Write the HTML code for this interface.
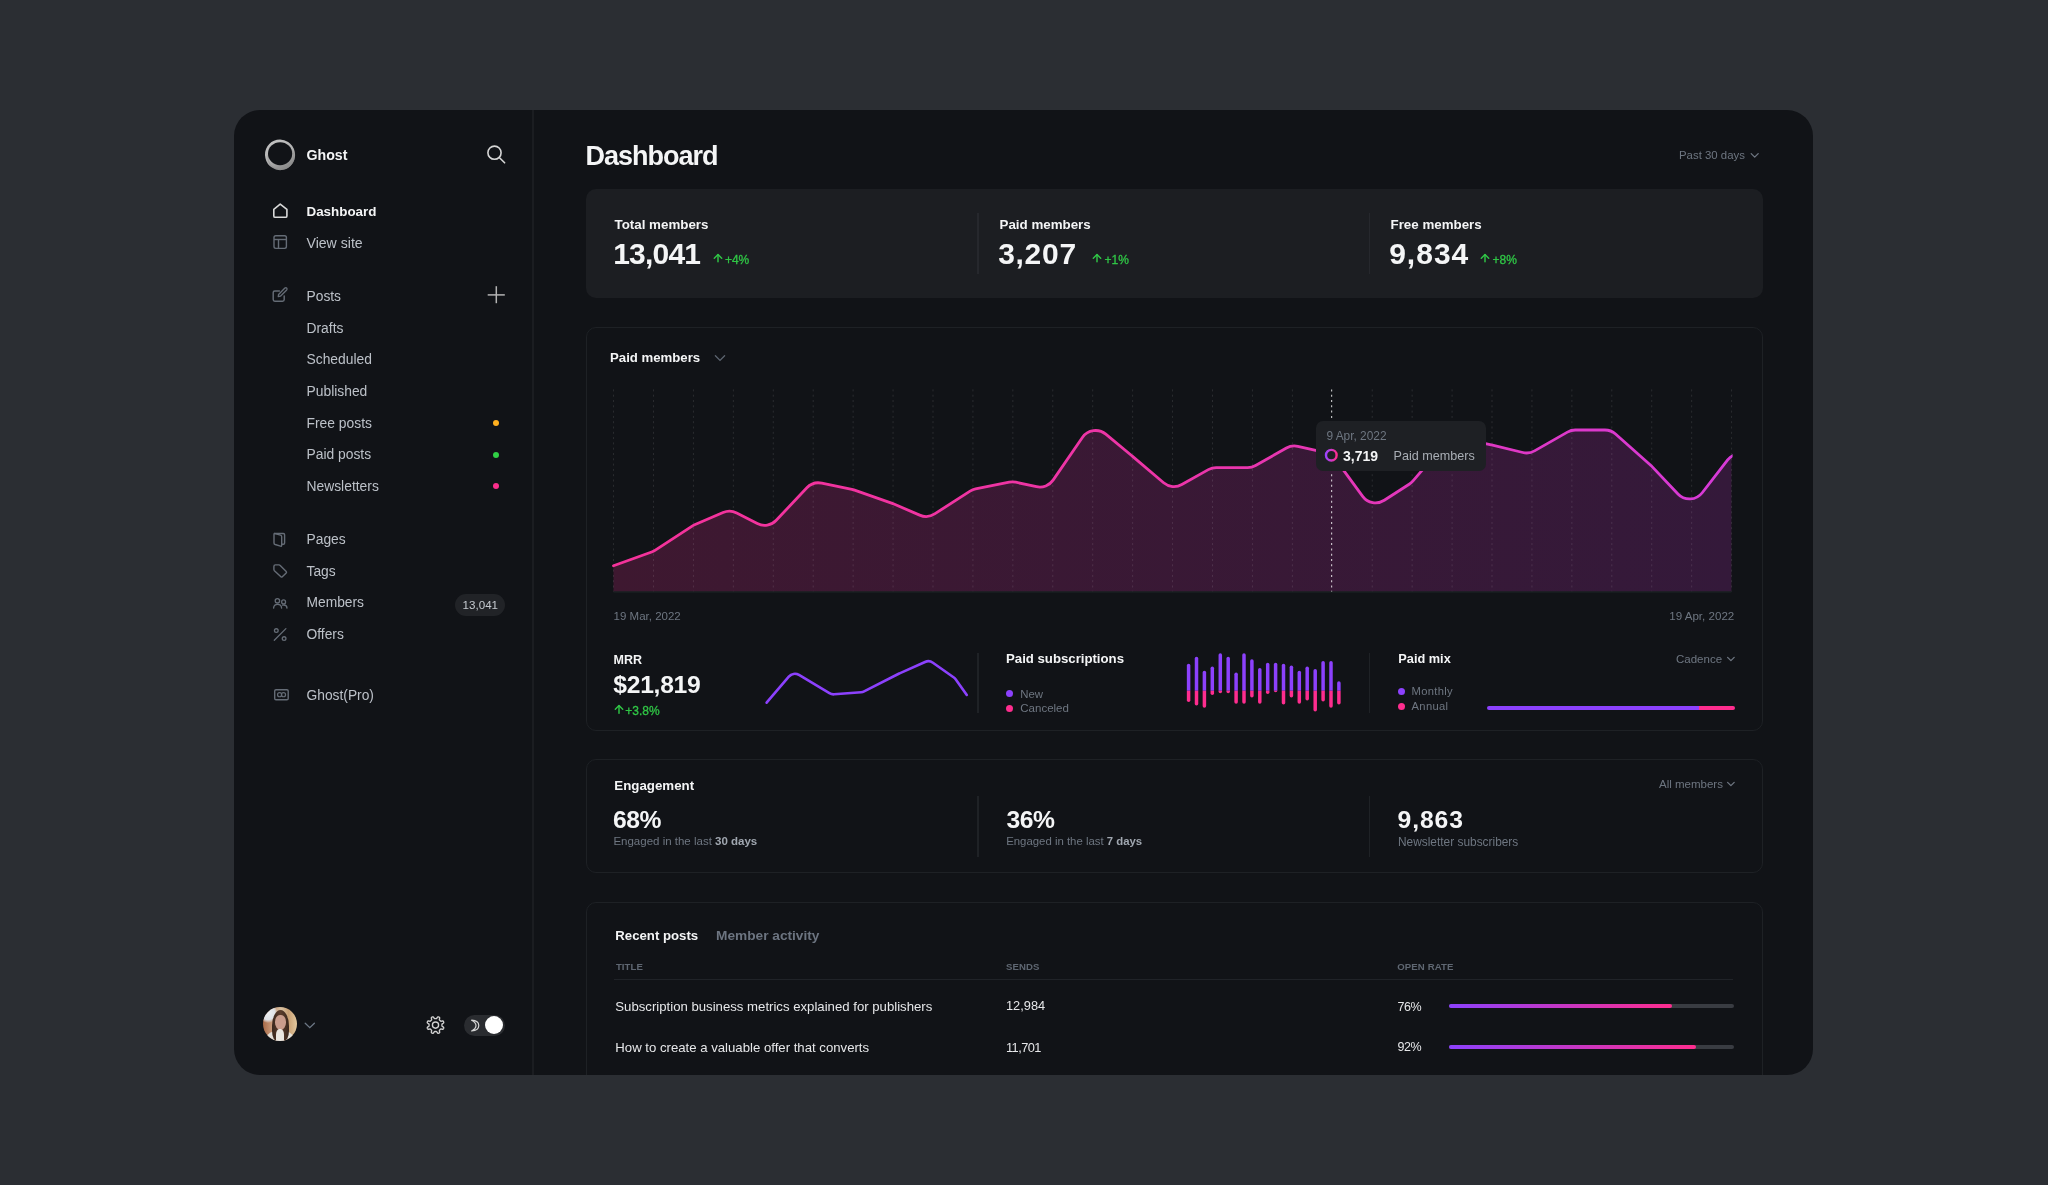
<!DOCTYPE html>
<html><head><meta charset="utf-8"><title>Ghost Dashboard</title>
<style>
html,body{margin:0;padding:0;}
body{width:2048px;height:1185px;background:#2b2e33;position:relative;overflow:hidden;font-family:"Liberation Sans",sans-serif;}
#win{position:absolute;left:234px;top:110px;width:1579px;height:965px;background:#111317;border-radius:26px;overflow:hidden;}
#in{position:absolute;left:-234px;top:-110px;width:2048px;height:1185px;will-change:transform;}
.t{position:absolute;line-height:1;white-space:nowrap;}
.b{position:absolute;}
</style></head><body>
<div id="win"><div id="in">
<div class="b" style="left:532px;top:110px;width:2px;height:965px;background:#1b1d21;border-radius:0px;"></div>
<svg class="b" style="left:0;top:0" width="2048" height="1185" viewBox="0 0 2048 1185"><defs><linearGradient id="lgo" x1="0" y1="0" x2="0.3" y2="1"><stop offset="0" stop-color="#c4c4c4"/><stop offset="0.6" stop-color="#b2b2b2"/><stop offset="1" stop-color="#8e8e8e"/></linearGradient></defs><ellipse cx="280.1" cy="154.8" rx="15" ry="15.35" fill="url(#lgo)" transform="rotate(-12 280 155)"/><ellipse cx="280.5" cy="157.6" rx="13.2" ry="12.2" fill="none" stroke="#8a8a8a" stroke-width="0.7" stroke-opacity="0.7" transform="rotate(-12 280 155)"/><ellipse cx="280.1" cy="153.7" rx="12.1" ry="11.5" fill="#111317"/></svg>
<div class="t" style="left:306.50px;top:148.38px;font-size:14.2px;color:#f4f5f6;font-weight:700;">Ghost</div>
<svg class="b" style="left:484px;top:142px;" width="24" height="24" viewBox="0 0 24 24"><circle cx="10.5" cy="10.7" r="6.6" fill="none" stroke="#d6d6d6" stroke-width="1.6"/><line x1="15.3" y1="15.5" x2="20.6" y2="20.8" stroke="#d6d6d6" stroke-width="1.6" stroke-linecap="round"/></svg>
<svg class="b" style="left:0;top:0" width="2048" height="1185" viewBox="0 0 2048 1185"><path d="M273.8 209.3 L280.2 204.1 L286.9 209.3 V215.9 Q286.9 217.3 285.5 217.3 H275.2 Q273.8 217.3 273.8 215.9 Z" fill="none" stroke="#d9d9d9" stroke-width="1.6" stroke-linejoin="round"/><rect x="274" y="235.7" width="12.4" height="12.7" rx="1.8" fill="none" stroke="#656c76" stroke-width="1.4"/><line x1="274" y1="239.5" x2="286.4" y2="239.5" stroke="#656c76" stroke-width="1.4"/><line x1="278.5" y1="239.5" x2="278.5" y2="248.4" stroke="#656c76" stroke-width="1.4"/><path d="M279.4 290.9 H274.8 Q273.2 290.9 273.2 292.5 V299.6 Q273.2 301.2 274.8 301.2 H282.6 Q284.2 301.2 284.2 299.6 V295.9" fill="none" stroke="#656c76" stroke-width="1.45" stroke-linecap="round"/><path d="M278.3 296.6 L278.6 294.4 L284.9 288.1 Q285.8 287.3 286.7 288.1 Q287.5 289 286.7 289.9 L280.4 296.2 Z" fill="none" stroke="#656c76" stroke-width="1.35" stroke-linejoin="round"/><path d="M274.2 533.5 H283.3 Q284.6 533.5 284.6 534.8 V542.9 Q284.6 544.2 283.3 544.2 H281.8" fill="none" stroke="#656c76" stroke-width="1.4" stroke-linejoin="round"/><path d="M274 534.4 Q274 533.3 275.1 533.6 L280.5 535.2 Q281.7 535.6 281.7 536.8 V545.3 Q281.7 546.5 280.5 546.1 L275.2 544.5 Q274 544.1 274 542.9 Z" fill="none" stroke="#656c76" stroke-width="1.4" stroke-linejoin="round"/><path d="M273.9 569.6 V566.4 Q273.9 564.9 275.4 564.9 H279 Q279.7 564.9 280.2 565.4 L286.2 571.5 Q286.9 572.2 286.2 572.9 L282.3 576.8 Q281.6 577.5 280.9 576.8 L274.4 570.7 Q273.9 570.2 273.9 569.6 Z" fill="none" stroke="#656c76" stroke-width="1.4" stroke-linejoin="round"/><circle cx="277.4" cy="600.8" r="2.2" fill="none" stroke="#656c76" stroke-width="1.3"/><circle cx="283.6" cy="601.9" r="1.95" fill="none" stroke="#656c76" stroke-width="1.3"/><path d="M273.6 608.1 Q273.8 604.4 277.6 604.4 Q281.4 604.4 281.6 608.1" fill="none" stroke="#656c76" stroke-width="1.3" stroke-linecap="round"/><path d="M282.6 605.2 Q283.1 605 283.8 605 Q286.8 605 287 608.1" fill="none" stroke="#656c76" stroke-width="1.3" stroke-linecap="round"/><circle cx="276.3" cy="630.6" r="1.85" fill="none" stroke="#656c76" stroke-width="1.3"/><circle cx="284.1" cy="638.6" r="1.85" fill="none" stroke="#656c76" stroke-width="1.3"/><line x1="274.3" y1="640.2" x2="285.9" y2="628.6" stroke="#656c76" stroke-width="1.3" stroke-linecap="round"/><rect x="274.7" y="689.7" width="13.5" height="10.1" rx="1.3" fill="none" stroke="#656c76" stroke-width="1.4"/><circle cx="279.6" cy="694.7" r="2.05" fill="none" stroke="#656c76" stroke-width="1.2"/><circle cx="283.5" cy="694.7" r="2.05" fill="none" stroke="#656c76" stroke-width="1.2"/></svg>
<div class="t" style="left:306.50px;top:205.06px;font-size:13.4px;color:#f4f5f6;font-weight:700;">Dashboard</div>
<div class="t" style="left:306.50px;top:236.26px;font-size:14.1px;color:#bcc1c8;">View site</div>
<div class="t" style="left:306.50px;top:290.22px;font-size:13.8px;color:#bcc1c8;">Posts</div>
<svg class="b" style="left:486px;top:285px;" width="20" height="20" viewBox="0 0 20 20"><line x1="10.3" y1="1.2" x2="10.3" y2="18.2" stroke="#b4b4b4" stroke-width="1.5"/><line x1="1.7" y1="9.9" x2="18.8" y2="9.9" stroke="#b4b4b4" stroke-width="1.5"/></svg>
<div class="t" style="left:306.50px;top:321.58px;font-size:13.85px;color:#bcc1c8;">Drafts</div>
<div class="t" style="left:306.50px;top:353.08px;font-size:13.85px;color:#bcc1c8;">Scheduled</div>
<div class="t" style="left:306.50px;top:384.88px;font-size:13.85px;color:#bcc1c8;">Published</div>
<div class="t" style="left:306.50px;top:416.78px;font-size:13.85px;color:#bcc1c8;">Free posts</div>
<div class="t" style="left:306.50px;top:448.28px;font-size:13.85px;color:#bcc1c8;">Paid posts</div>
<div class="t" style="left:306.50px;top:479.78px;font-size:13.85px;color:#bcc1c8;">Newsletters</div>
<div class="b" style="left:493.3px;top:420.3px;width:5.8px;height:5.8px;background:#ffb01f;border-radius:3px;"></div>
<div class="b" style="left:493.3px;top:451.8px;width:5.8px;height:5.8px;background:#30d045;border-radius:3px;"></div>
<div class="b" style="left:493.3px;top:483.3px;width:5.8px;height:5.8px;background:#fb2e8c;border-radius:3px;"></div>
<div class="t" style="left:306.50px;top:533.02px;font-size:13.8px;color:#bcc1c8;">Pages</div>
<div class="t" style="left:306.50px;top:564.92px;font-size:13.8px;color:#bcc1c8;">Tags</div>
<div class="t" style="left:306.50px;top:596.12px;font-size:13.8px;color:#bcc1c8;">Members</div>
<div class="b" style="left:455px;top:594.2px;width:50px;height:21.8px;background:#212327;border-radius:11px;"></div>
<div class="t" style="left:462.60px;top:599.18px;font-size:11.6px;color:#c4c9cf;">13,041</div>
<div class="t" style="left:306.50px;top:627.92px;font-size:13.8px;color:#bcc1c8;">Offers</div>
<div class="t" style="left:306.50px;top:688.62px;font-size:13.8px;color:#bcc1c8;">Ghost(Pro)</div>
<div class="b" style="left:263px;top:1007px;width:34px;height:34px;border-radius:50%;overflow:hidden;background:linear-gradient(90deg,#a86a48 0%,#c89878 25%,#d8c0a0 55%,#c9a074 75%,#e2c89e 100%);"><div style="position:absolute;left:-4px;top:-4px;width:18px;height:20px;border-radius:50%;background:radial-gradient(circle at 50% 50%,#eef0f2 0%,#dfe2e6 50%,rgba(220,220,225,0) 75%)"></div><div style="position:absolute;left:3px;top:23px;width:28px;height:18px;border-radius:50% 50% 0 0;background:#e4e0da;filter:blur(0.5px)"></div><div style="position:absolute;left:8.5px;top:3px;width:17px;height:32px;border-radius:50% 50% 35% 35%;background:linear-gradient(90deg,#3a271d,#5b3d2c 50%,#3a271d);filter:blur(0.4px)"></div><div style="position:absolute;left:11.5px;top:8px;width:11px;height:15px;border-radius:45% 45% 50% 50%;background:#c99c8c;filter:blur(0.4px)"></div><div style="position:absolute;left:13px;top:22px;width:8px;height:14px;border-radius:40% 40% 0 0;background:#ebe7e1;filter:blur(0.4px)"></div></div>
<svg class="b" style="left:303px;top:1020px;" width="14" height="10" viewBox="0 0 14 10"><path d="M2.2 3.2 L6.8 7.6 L11.4 3.2" fill="none" stroke="#6c7785" stroke-width="1.3" stroke-linecap="round"/></svg>
<svg class="b" style="left:0;top:0" width="2048" height="1185" viewBox="0 0 2048 1185"><path d="M435.50 1018.66 L435.67 1018.66 L435.84 1018.66 L436.01 1018.67 L436.18 1018.67 L436.35 1018.66 L436.53 1018.59 L436.75 1018.38 L437.02 1017.94 L437.35 1017.40 L437.66 1017.03 L437.94 1016.88 L438.18 1016.86 L438.41 1016.89 L438.63 1016.96 L438.84 1017.04 L439.05 1017.13 L439.25 1017.24 L439.44 1017.38 L439.59 1017.56 L439.68 1017.86 L439.64 1018.35 L439.49 1018.96 L439.37 1019.47 L439.37 1019.77 L439.45 1019.95 L439.57 1020.08 L439.69 1020.20 L439.81 1020.31 L439.93 1020.43 L440.06 1020.54 L440.17 1020.67 L440.29 1020.79 L440.40 1020.91 L440.52 1021.03 L440.65 1021.15 L440.83 1021.23 L441.13 1021.23 L441.64 1021.11 L442.25 1020.96 L442.74 1020.92 L443.04 1021.01 L443.22 1021.16 L443.36 1021.35 L443.47 1021.55 L443.56 1021.76 L443.64 1021.97 L443.71 1022.19 L443.74 1022.42 L443.72 1022.66 L443.57 1022.94 L443.20 1023.25 L442.66 1023.58 L442.22 1023.85 L442.01 1024.07 L441.94 1024.25 L441.93 1024.42 L441.93 1024.59 L441.94 1024.76 L441.94 1024.93 L441.94 1025.10 L441.94 1025.27 L441.94 1025.44 L441.93 1025.61 L441.93 1025.78 L441.94 1025.95 L442.01 1026.13 L442.22 1026.35 L442.66 1026.62 L443.20 1026.95 L443.57 1027.26 L443.72 1027.54 L443.74 1027.78 L443.71 1028.01 L443.64 1028.23 L443.56 1028.44 L443.47 1028.65 L443.36 1028.85 L443.22 1029.04 L443.04 1029.19 L442.74 1029.28 L442.25 1029.24 L441.64 1029.09 L441.13 1028.97 L440.83 1028.97 L440.65 1029.05 L440.52 1029.17 L440.40 1029.29 L440.29 1029.41 L440.17 1029.53 L440.06 1029.66 L439.93 1029.77 L439.81 1029.89 L439.69 1030.00 L439.57 1030.12 L439.45 1030.25 L439.37 1030.43 L439.37 1030.73 L439.49 1031.24 L439.64 1031.85 L439.68 1032.34 L439.59 1032.64 L439.44 1032.82 L439.25 1032.96 L439.05 1033.07 L438.84 1033.16 L438.63 1033.24 L438.41 1033.31 L438.18 1033.34 L437.94 1033.32 L437.66 1033.17 L437.35 1032.80 L437.02 1032.26 L436.75 1031.82 L436.53 1031.61 L436.35 1031.54 L436.18 1031.53 L436.01 1031.53 L435.84 1031.54 L435.67 1031.54 L435.50 1031.54 L435.33 1031.54 L435.16 1031.54 L434.99 1031.53 L434.82 1031.53 L434.65 1031.54 L434.47 1031.61 L434.25 1031.82 L433.98 1032.26 L433.65 1032.80 L433.34 1033.17 L433.06 1033.32 L432.82 1033.34 L432.59 1033.31 L432.37 1033.24 L432.16 1033.16 L431.95 1033.07 L431.75 1032.96 L431.56 1032.82 L431.41 1032.64 L431.32 1032.34 L431.36 1031.85 L431.51 1031.24 L431.63 1030.73 L431.63 1030.43 L431.55 1030.25 L431.43 1030.12 L431.31 1030.00 L431.19 1029.89 L431.07 1029.77 L430.94 1029.66 L430.83 1029.53 L430.71 1029.41 L430.60 1029.29 L430.48 1029.17 L430.35 1029.05 L430.17 1028.97 L429.87 1028.97 L429.36 1029.09 L428.75 1029.24 L428.26 1029.28 L427.96 1029.19 L427.78 1029.04 L427.64 1028.85 L427.53 1028.65 L427.44 1028.44 L427.36 1028.23 L427.29 1028.01 L427.26 1027.78 L427.28 1027.54 L427.43 1027.26 L427.80 1026.95 L428.34 1026.62 L428.78 1026.35 L428.99 1026.13 L429.06 1025.95 L429.07 1025.78 L429.07 1025.61 L429.06 1025.44 L429.06 1025.27 L429.06 1025.10 L429.06 1024.93 L429.06 1024.76 L429.07 1024.59 L429.07 1024.42 L429.06 1024.25 L428.99 1024.07 L428.78 1023.85 L428.34 1023.58 L427.80 1023.25 L427.43 1022.94 L427.28 1022.66 L427.26 1022.42 L427.29 1022.19 L427.36 1021.97 L427.44 1021.76 L427.53 1021.55 L427.64 1021.35 L427.78 1021.16 L427.96 1021.01 L428.26 1020.92 L428.75 1020.96 L429.36 1021.11 L429.87 1021.23 L430.17 1021.23 L430.35 1021.15 L430.48 1021.03 L430.60 1020.91 L430.71 1020.79 L430.83 1020.67 L430.94 1020.54 L431.07 1020.43 L431.19 1020.31 L431.31 1020.20 L431.43 1020.08 L431.55 1019.95 L431.63 1019.77 L431.63 1019.47 L431.51 1018.96 L431.36 1018.35 L431.32 1017.86 L431.41 1017.56 L431.56 1017.38 L431.75 1017.24 L431.95 1017.13 L432.16 1017.04 L432.37 1016.96 L432.59 1016.89 L432.82 1016.86 L433.06 1016.88 L433.34 1017.03 L433.65 1017.40 L433.98 1017.94 L434.25 1018.38 L434.47 1018.59 L434.65 1018.66 L434.82 1018.67 L434.99 1018.67 L435.16 1018.66 L435.33 1018.66 Z" fill="none" stroke="#d0d0d0" stroke-width="1.35" stroke-linejoin="round"/><circle cx="435.5" cy="1025.1" r="3.1" fill="none" stroke="#d0d0d0" stroke-width="1.35"/></svg>
<div class="b" style="left:463.5px;top:1015px;width:41px;height:21px;background:#2a2c30;border-radius:10.5px;"></div>
<svg class="b" style="left:468px;top:1018px;" width="14" height="15" viewBox="0 0 14 15"><path d="M3.6 2.2 Q10.8 2.6 10.8 7.6 Q10.8 12.6 3.6 13.0 Q8 10.8 8 7.6 Q8 4.4 3.6 2.2 Z" fill="none" stroke="#d4d4d4" stroke-width="1.2" stroke-linejoin="round"/></svg>
<div class="b" style="left:484.6px;top:1016.3px;width:18px;height:18px;background:#ffffff;border-radius:9px;"></div>
<div class="t" style="left:585.40px;top:143.24px;font-size:27px;color:#f4f5f6;font-weight:700;letter-spacing:-1.0px;">Dashboard</div>
<div class="t" style="left:1679.00px;top:149.75px;font-size:11.4px;color:#6e7681;">Past 30 days</div>
<svg class="b" style="left:1748px;top:150px;" width="12" height="10" viewBox="0 0 12 10"><path d="M3.2 3.6 L6.7 7.1 L10.2 3.6" fill="none" stroke="#6e7681" stroke-width="1.3" stroke-linecap="round" stroke-linejoin="round"/></svg>
<div class="b" style="left:586px;top:189px;width:1177px;height:109px;background:#1c1e22;border-radius:10px;"></div>
<div class="b" style="left:977.4px;top:213px;width:1.3px;height:61px;background:#26282d;border-radius:0px;"></div>
<div class="b" style="left:1368.9px;top:213px;width:1.3px;height:61px;background:#26282d;border-radius:0px;"></div>
<div class="t" style="left:614.50px;top:218.30px;font-size:13.35px;color:#f4f5f6;font-weight:700;">Total members</div>
<div class="t" style="left:613.20px;top:239.10px;font-size:30px;color:#f4f5f6;font-weight:700;letter-spacing:-0.8px;">13,041</div>
<svg class="b" style="left:711.6px;top:252.4px;" width="12" height="14" viewBox="0 0 12 14"><line x1="6" y1="2.6" x2="6" y2="9.8" stroke="#30c646" stroke-width="1.45" stroke-linecap="round"/><path d="M2.3 6.2 L6 2.6 L9.7 6.2" fill="none" stroke="#30c646" stroke-width="1.45" stroke-linecap="round" stroke-linejoin="round"/></svg>
<div class="t" style="left:724.90px;top:253.84px;font-size:12px;color:#30c646;-webkit-text-stroke:0.3px #30c646;">+4%</div>
<div class="t" style="left:999.50px;top:218.30px;font-size:13.35px;color:#f4f5f6;font-weight:700;">Paid members</div>
<div class="t" style="left:998.20px;top:239.10px;font-size:30px;color:#f4f5f6;font-weight:700;letter-spacing:0.7px;">3,207</div>
<svg class="b" style="left:1091.2px;top:252.4px;" width="12" height="14" viewBox="0 0 12 14"><line x1="6" y1="2.6" x2="6" y2="9.8" stroke="#30c646" stroke-width="1.45" stroke-linecap="round"/><path d="M2.3 6.2 L6 2.6 L9.7 6.2" fill="none" stroke="#30c646" stroke-width="1.45" stroke-linecap="round" stroke-linejoin="round"/></svg>
<div class="t" style="left:1104.50px;top:253.84px;font-size:12px;color:#30c646;-webkit-text-stroke:0.3px #30c646;">+1%</div>
<div class="t" style="left:1390.50px;top:218.30px;font-size:13.35px;color:#f4f5f6;font-weight:700;">Free members</div>
<div class="t" style="left:1389.20px;top:239.10px;font-size:30px;color:#f4f5f6;font-weight:700;letter-spacing:1.0px;">9,834</div>
<svg class="b" style="left:1479.2px;top:252.4px;" width="12" height="14" viewBox="0 0 12 14"><line x1="6" y1="2.6" x2="6" y2="9.8" stroke="#30c646" stroke-width="1.45" stroke-linecap="round"/><path d="M2.3 6.2 L6 2.6 L9.7 6.2" fill="none" stroke="#30c646" stroke-width="1.45" stroke-linecap="round" stroke-linejoin="round"/></svg>
<div class="t" style="left:1492.50px;top:253.84px;font-size:12px;color:#30c646;-webkit-text-stroke:0.3px #30c646;">+8%</div>
<div class="b" style="left:586px;top:327px;width:1177px;height:404px;border:1.8px solid #1e2125;border-radius:10px;box-sizing:border-box;"></div>
<div class="t" style="left:610.00px;top:351.23px;font-size:13.2px;color:#f4f5f6;font-weight:700;">Paid members</div>
<svg class="b" style="left:713px;top:353px;" width="14" height="10" viewBox="0 0 14 10"><path d="M2.4 2.8 L7 7.4 L11.6 2.8" fill="none" stroke="#5d6570" stroke-width="1.3" stroke-linecap="round"/></svg>
<svg class="b" style="left:0;top:0" width="2048" height="1185" viewBox="0 0 2048 1185"><defs><linearGradient id="lg" x1="613" y1="0" x2="1731" y2="0" gradientUnits="userSpaceOnUse"><stop offset="0" stop-color="#f5329a"/><stop offset="0.5" stop-color="#ec35a8"/><stop offset="1" stop-color="#d63ad8"/></linearGradient><linearGradient id="fg" x1="613" y1="0" x2="1731" y2="0" gradientUnits="userSpaceOnUse"><stop offset="0" stop-color="#3e1830"/><stop offset="1" stop-color="#34193a"/></linearGradient></defs><clipPath id="cc"><rect x="600" y="380" width="1131.4" height="220"/></clipPath><path d="M613.50 565.70 L651.62 552.04 A16.00 16.00 0 0 0 654.98 550.37 L692.14 526.06 A16.00 16.00 0 0 1 694.57 524.75 L723.08 512.48 A16.00 16.00 0 0 1 736.71 512.94 L757.31 523.51 A16.00 16.00 0 0 0 776.25 520.26 L806.86 487.81 A16.00 16.00 0 0 1 821.76 483.12 L851.88 489.39 A16.00 16.00 0 0 1 853.88 489.94 L892.25 503.31 A16.00 16.00 0 0 1 893.33 503.73 L919.67 515.12 A16.00 16.00 0 0 0 934.67 513.89 L970.06 491.14 A16.00 16.00 0 0 1 975.56 488.91 L1009.22 482.16 A16.00 16.00 0 0 1 1015.77 482.21 L1036.49 486.72 A16.00 16.00 0 0 0 1053.08 480.14 L1082.38 437.45 A16.00 16.00 0 0 1 1105.79 434.19 L1132.13 456.04 A16.00 16.00 0 0 1 1132.27 456.16 L1163.62 482.79 A16.00 16.00 0 0 0 1181.81 484.55 L1208.35 469.65 A16.00 16.00 0 0 1 1216.18 467.60 L1247.68 467.60 A16.00 16.00 0 0 0 1255.57 465.52 L1286.42 448.05 A16.00 16.00 0 0 1 1297.83 446.36 L1325.85 452.68 A16.00 16.00 0 0 1 1335.24 458.84 L1362.68 496.32 A16.00 16.00 0 0 0 1384.28 500.30 L1409.54 483.97 A16.00 16.00 0 0 0 1413.02 480.93 L1445.16 443.30 A16.00 16.00 0 0 1 1460.77 438.07 L1491.13 444.76 A16.00 16.00 0 0 1 1491.47 444.84 L1522.81 452.49 A16.00 16.00 0 0 0 1534.53 450.85 L1567.42 432.10 A16.00 16.00 0 0 1 1575.34 430.00 L1604.93 430.00 A16.00 16.00 0 0 1 1615.54 434.03 L1650.38 464.94 A16.00 16.00 0 0 1 1651.38 465.90 L1677.97 493.96 A16.00 16.00 0 0 0 1702.23 492.75 L1727.66 459.92 A16.00 16.00 0 0 1 1735.42 454.49 L1765.00 445.00 L1765 591.6 L613.5 591.6 Z" fill="url(#fg)" clip-path="url(#cc)"/><line x1="613.55" y1="389.4" x2="613.55" y2="591.5" stroke="#ffffff" stroke-opacity="0.11" stroke-width="1" stroke-dasharray="2 3.3"/><line x1="653.48" y1="389.4" x2="653.48" y2="591.5" stroke="#ffffff" stroke-opacity="0.11" stroke-width="1" stroke-dasharray="2 3.3"/><line x1="693.41" y1="389.4" x2="693.41" y2="591.5" stroke="#ffffff" stroke-opacity="0.11" stroke-width="1" stroke-dasharray="2 3.3"/><line x1="733.34" y1="389.4" x2="733.34" y2="591.5" stroke="#ffffff" stroke-opacity="0.11" stroke-width="1" stroke-dasharray="2 3.3"/><line x1="773.27" y1="389.4" x2="773.27" y2="591.5" stroke="#ffffff" stroke-opacity="0.11" stroke-width="1" stroke-dasharray="2 3.3"/><line x1="813.20" y1="389.4" x2="813.20" y2="591.5" stroke="#ffffff" stroke-opacity="0.11" stroke-width="1" stroke-dasharray="2 3.3"/><line x1="853.13" y1="389.4" x2="853.13" y2="591.5" stroke="#ffffff" stroke-opacity="0.11" stroke-width="1" stroke-dasharray="2 3.3"/><line x1="893.06" y1="389.4" x2="893.06" y2="591.5" stroke="#ffffff" stroke-opacity="0.11" stroke-width="1" stroke-dasharray="2 3.3"/><line x1="932.99" y1="389.4" x2="932.99" y2="591.5" stroke="#ffffff" stroke-opacity="0.11" stroke-width="1" stroke-dasharray="2 3.3"/><line x1="972.92" y1="389.4" x2="972.92" y2="591.5" stroke="#ffffff" stroke-opacity="0.11" stroke-width="1" stroke-dasharray="2 3.3"/><line x1="1012.85" y1="389.4" x2="1012.85" y2="591.5" stroke="#ffffff" stroke-opacity="0.11" stroke-width="1" stroke-dasharray="2 3.3"/><line x1="1052.78" y1="389.4" x2="1052.78" y2="591.5" stroke="#ffffff" stroke-opacity="0.11" stroke-width="1" stroke-dasharray="2 3.3"/><line x1="1092.71" y1="389.4" x2="1092.71" y2="591.5" stroke="#ffffff" stroke-opacity="0.11" stroke-width="1" stroke-dasharray="2 3.3"/><line x1="1132.64" y1="389.4" x2="1132.64" y2="591.5" stroke="#ffffff" stroke-opacity="0.11" stroke-width="1" stroke-dasharray="2 3.3"/><line x1="1172.57" y1="389.4" x2="1172.57" y2="591.5" stroke="#ffffff" stroke-opacity="0.11" stroke-width="1" stroke-dasharray="2 3.3"/><line x1="1212.50" y1="389.4" x2="1212.50" y2="591.5" stroke="#ffffff" stroke-opacity="0.11" stroke-width="1" stroke-dasharray="2 3.3"/><line x1="1252.43" y1="389.4" x2="1252.43" y2="591.5" stroke="#ffffff" stroke-opacity="0.11" stroke-width="1" stroke-dasharray="2 3.3"/><line x1="1292.36" y1="389.4" x2="1292.36" y2="591.5" stroke="#ffffff" stroke-opacity="0.11" stroke-width="1" stroke-dasharray="2 3.3"/><line x1="1372.22" y1="389.4" x2="1372.22" y2="591.5" stroke="#ffffff" stroke-opacity="0.11" stroke-width="1" stroke-dasharray="2 3.3"/><line x1="1412.15" y1="389.4" x2="1412.15" y2="591.5" stroke="#ffffff" stroke-opacity="0.11" stroke-width="1" stroke-dasharray="2 3.3"/><line x1="1452.08" y1="389.4" x2="1452.08" y2="591.5" stroke="#ffffff" stroke-opacity="0.11" stroke-width="1" stroke-dasharray="2 3.3"/><line x1="1492.01" y1="389.4" x2="1492.01" y2="591.5" stroke="#ffffff" stroke-opacity="0.11" stroke-width="1" stroke-dasharray="2 3.3"/><line x1="1531.94" y1="389.4" x2="1531.94" y2="591.5" stroke="#ffffff" stroke-opacity="0.11" stroke-width="1" stroke-dasharray="2 3.3"/><line x1="1571.87" y1="389.4" x2="1571.87" y2="591.5" stroke="#ffffff" stroke-opacity="0.11" stroke-width="1" stroke-dasharray="2 3.3"/><line x1="1611.80" y1="389.4" x2="1611.80" y2="591.5" stroke="#ffffff" stroke-opacity="0.11" stroke-width="1" stroke-dasharray="2 3.3"/><line x1="1651.73" y1="389.4" x2="1651.73" y2="591.5" stroke="#ffffff" stroke-opacity="0.11" stroke-width="1" stroke-dasharray="2 3.3"/><line x1="1691.66" y1="389.4" x2="1691.66" y2="591.5" stroke="#ffffff" stroke-opacity="0.11" stroke-width="1" stroke-dasharray="2 3.3"/><line x1="1731.59" y1="389.4" x2="1731.59" y2="591.5" stroke="#ffffff" stroke-opacity="0.11" stroke-width="1" stroke-dasharray="2 3.3"/><line x1="1331.6" y1="389.4" x2="1331.6" y2="592" stroke="#ffffff" stroke-opacity="0.72" stroke-width="1.2" stroke-dasharray="2 3.3"/><line x1="613.5" y1="592" x2="1731.4" y2="592" stroke="#1d2626" stroke-width="1.2"/><path d="M613.50 565.70 L651.62 552.04 A16.00 16.00 0 0 0 654.98 550.37 L692.14 526.06 A16.00 16.00 0 0 1 694.57 524.75 L723.08 512.48 A16.00 16.00 0 0 1 736.71 512.94 L757.31 523.51 A16.00 16.00 0 0 0 776.25 520.26 L806.86 487.81 A16.00 16.00 0 0 1 821.76 483.12 L851.88 489.39 A16.00 16.00 0 0 1 853.88 489.94 L892.25 503.31 A16.00 16.00 0 0 1 893.33 503.73 L919.67 515.12 A16.00 16.00 0 0 0 934.67 513.89 L970.06 491.14 A16.00 16.00 0 0 1 975.56 488.91 L1009.22 482.16 A16.00 16.00 0 0 1 1015.77 482.21 L1036.49 486.72 A16.00 16.00 0 0 0 1053.08 480.14 L1082.38 437.45 A16.00 16.00 0 0 1 1105.79 434.19 L1132.13 456.04 A16.00 16.00 0 0 1 1132.27 456.16 L1163.62 482.79 A16.00 16.00 0 0 0 1181.81 484.55 L1208.35 469.65 A16.00 16.00 0 0 1 1216.18 467.60 L1247.68 467.60 A16.00 16.00 0 0 0 1255.57 465.52 L1286.42 448.05 A16.00 16.00 0 0 1 1297.83 446.36 L1325.85 452.68 A16.00 16.00 0 0 1 1335.24 458.84 L1362.68 496.32 A16.00 16.00 0 0 0 1384.28 500.30 L1409.54 483.97 A16.00 16.00 0 0 0 1413.02 480.93 L1445.16 443.30 A16.00 16.00 0 0 1 1460.77 438.07 L1491.13 444.76 A16.00 16.00 0 0 1 1491.47 444.84 L1522.81 452.49 A16.00 16.00 0 0 0 1534.53 450.85 L1567.42 432.10 A16.00 16.00 0 0 1 1575.34 430.00 L1604.93 430.00 A16.00 16.00 0 0 1 1615.54 434.03 L1650.38 464.94 A16.00 16.00 0 0 1 1651.38 465.90 L1677.97 493.96 A16.00 16.00 0 0 0 1702.23 492.75 L1727.66 459.92 A16.00 16.00 0 0 1 1735.42 454.49 L1765.00 445.00" fill="none" stroke="url(#lg)" stroke-width="2.8" stroke-linejoin="round" stroke-linecap="round" clip-path="url(#cc2)"/><clipPath id="cc2"><rect x="600" y="380" width="1132.6" height="220"/></clipPath></svg>
<div class="b" style="left:1316.2px;top:421px;width:169.5px;height:50px;background:#1e2024;border-radius:7px;"></div>
<div class="t" style="left:1326.40px;top:431.13px;font-size:11.9px;color:#6e7681;">9 Apr, 2022</div>
<svg class="b" style="left:1323px;top:447px;" width="16" height="16" viewBox="0 0 16 16"><defs><linearGradient id="cg" x1="0" y1="0" x2="1" y2="0"><stop offset="0" stop-color="#9b45ff"/><stop offset="1" stop-color="#ff2d8e"/></linearGradient></defs><circle cx="8.3" cy="8.2" r="5.3" fill="none" stroke="url(#cg)" stroke-width="2.4"/></svg>
<div class="t" style="left:1343.00px;top:448.55px;font-size:14px;color:#f4f5f6;font-weight:700;">3,719</div>
<div class="t" style="left:1393.50px;top:449.73px;font-size:12.6px;color:#a9aeb5;">Paid members</div>
<div class="t" style="left:613.60px;top:610.97px;font-size:11.5px;color:#6e7681;">19 Mar, 2022</div>
<div class="t" style="right:313.70px;top:610.48px;font-size:11.6px;color:#6e7681;">19 Apr, 2022</div>
<div class="b" style="left:977.3px;top:653px;width:1.5px;height:60px;background:#1f2226;border-radius:0px;"></div>
<div class="b" style="left:1368.8px;top:653px;width:1.5px;height:60px;background:#1f2226;border-radius:0px;"></div>
<div class="t" style="left:613.50px;top:653.82px;font-size:12.5px;color:#f4f5f6;font-weight:700;">MRR</div>
<div class="t" style="left:613.30px;top:673.29px;font-size:24.7px;color:#f4f5f6;font-weight:700;letter-spacing:-0.3px;">$21,819</div>
<svg class="b" style="left:612.6px;top:703.2px;" width="12" height="14" viewBox="0 0 12 14"><line x1="6" y1="2.6" x2="6" y2="10.2" stroke="#30c646" stroke-width="1.45" stroke-linecap="round"/><path d="M2.3 6.2 L6 2.6 L9.7 6.2" fill="none" stroke="#30c646" stroke-width="1.45" stroke-linecap="round" stroke-linejoin="round"/></svg>
<div class="t" style="left:625.30px;top:704.74px;font-size:12px;color:#30c646;-webkit-text-stroke:0.3px #30c646;">+3.8%</div>
<svg class="b" style="left:0;top:0" width="2048" height="1185" viewBox="0 0 2048 1185"><path d="M766.60 702.70 L788.81 676.65 A8.00 8.00 0 0 1 799.01 674.98 L829.41 693.19 A8.00 8.00 0 0 0 834.14 694.30 L861.11 692.22 A8.00 8.00 0 0 0 864.12 691.37 L899.22 673.49 A8.00 8.00 0 0 1 899.59 673.32 L925.05 661.95 A8.00 8.00 0 0 1 932.92 662.72 L953.87 677.51 A8.00 8.00 0 0 1 955.80 679.43 L966.80 695.00" fill="none" stroke="#8c41fd" stroke-width="2.6" stroke-linejoin="round" stroke-linecap="round"/></svg>
<div class="t" style="left:1006.00px;top:652.33px;font-size:13.2px;color:#f4f5f6;font-weight:700;">Paid subscriptions</div>
<div class="b" style="left:1006.2px;top:690px;width:7px;height:7px;background:#8c41fd;border-radius:3.5px;"></div>
<div class="b" style="left:1006.2px;top:705px;width:7px;height:7px;background:#fe2d8e;border-radius:3.5px;"></div>
<div class="t" style="left:1020.30px;top:688.85px;font-size:11.4px;color:#6e7681;">New</div>
<div class="t" style="left:1020.30px;top:703.47px;font-size:11.5px;color:#6e7681;">Canceled</div>
<svg class="b" style="left:0;top:0" width="2048" height="1185" viewBox="0 0 2048 1185"><clipPath id="cpu"><rect x="1150" y="600" width="220" height="90.8"/></clipPath><clipPath id="cpi"><rect x="1150" y="690.8" width="220" height="40"/></clipPath><g clip-path="url(#cpu)"><line x1="1188.6" y1="665.45" x2="1188.6" y2="700.25" stroke="#8c41fd" stroke-width="3.5" stroke-linecap="round"/><line x1="1196.5" y1="658.45" x2="1196.5" y2="703.75" stroke="#8c41fd" stroke-width="3.5" stroke-linecap="round"/><line x1="1204.4" y1="672.55" x2="1204.4" y2="705.95" stroke="#8c41fd" stroke-width="3.5" stroke-linecap="round"/><line x1="1212.3" y1="668.15" x2="1212.3" y2="693.15" stroke="#8c41fd" stroke-width="3.5" stroke-linecap="round"/><line x1="1220.3" y1="654.95" x2="1220.3" y2="691.45" stroke="#8c41fd" stroke-width="3.5" stroke-linecap="round"/><line x1="1228.2" y1="658.45" x2="1228.2" y2="691.45" stroke="#8c41fd" stroke-width="3.5" stroke-linecap="round"/><line x1="1236.1" y1="674.25" x2="1236.1" y2="701.95" stroke="#8c41fd" stroke-width="3.5" stroke-linecap="round"/><line x1="1244" y1="654.95" x2="1244" y2="701.95" stroke="#8c41fd" stroke-width="3.5" stroke-linecap="round"/><line x1="1251.9" y1="661.05" x2="1251.9" y2="695.85" stroke="#8c41fd" stroke-width="3.5" stroke-linecap="round"/><line x1="1259.8" y1="669.85" x2="1259.8" y2="701.95" stroke="#8c41fd" stroke-width="3.5" stroke-linecap="round"/><line x1="1267.7" y1="664.55" x2="1267.7" y2="692.25" stroke="#8c41fd" stroke-width="3.5" stroke-linecap="round"/><line x1="1275.6" y1="664.55" x2="1275.6" y2="690.55" stroke="#8c41fd" stroke-width="3.5" stroke-linecap="round"/><line x1="1283.5" y1="665.45" x2="1283.5" y2="702.85" stroke="#8c41fd" stroke-width="3.5" stroke-linecap="round"/><line x1="1291.4" y1="667.25" x2="1291.4" y2="695.85" stroke="#8c41fd" stroke-width="3.5" stroke-linecap="round"/><line x1="1299.3" y1="672.55" x2="1299.3" y2="701.95" stroke="#8c41fd" stroke-width="3.5" stroke-linecap="round"/><line x1="1307.2" y1="668.15" x2="1307.2" y2="698.85" stroke="#8c41fd" stroke-width="3.5" stroke-linecap="round"/><line x1="1315.2" y1="670.75" x2="1315.2" y2="709.85" stroke="#8c41fd" stroke-width="3.5" stroke-linecap="round"/><line x1="1323.1" y1="662.85" x2="1323.1" y2="699.75" stroke="#8c41fd" stroke-width="3.5" stroke-linecap="round"/><line x1="1331" y1="662.85" x2="1331" y2="705.95" stroke="#8c41fd" stroke-width="3.5" stroke-linecap="round"/><line x1="1338.9" y1="683.05" x2="1338.9" y2="702.85" stroke="#8c41fd" stroke-width="3.5" stroke-linecap="round"/></g><g clip-path="url(#cpi)"><line x1="1188.6" y1="665.45" x2="1188.6" y2="700.25" stroke="#fe2d8e" stroke-width="3.5" stroke-linecap="round"/><line x1="1196.5" y1="658.45" x2="1196.5" y2="703.75" stroke="#fe2d8e" stroke-width="3.5" stroke-linecap="round"/><line x1="1204.4" y1="672.55" x2="1204.4" y2="705.95" stroke="#fe2d8e" stroke-width="3.5" stroke-linecap="round"/><line x1="1212.3" y1="668.15" x2="1212.3" y2="693.15" stroke="#fe2d8e" stroke-width="3.5" stroke-linecap="round"/><line x1="1220.3" y1="654.95" x2="1220.3" y2="691.45" stroke="#fe2d8e" stroke-width="3.5" stroke-linecap="round"/><line x1="1228.2" y1="658.45" x2="1228.2" y2="691.45" stroke="#fe2d8e" stroke-width="3.5" stroke-linecap="round"/><line x1="1236.1" y1="674.25" x2="1236.1" y2="701.95" stroke="#fe2d8e" stroke-width="3.5" stroke-linecap="round"/><line x1="1244" y1="654.95" x2="1244" y2="701.95" stroke="#fe2d8e" stroke-width="3.5" stroke-linecap="round"/><line x1="1251.9" y1="661.05" x2="1251.9" y2="695.85" stroke="#fe2d8e" stroke-width="3.5" stroke-linecap="round"/><line x1="1259.8" y1="669.85" x2="1259.8" y2="701.95" stroke="#fe2d8e" stroke-width="3.5" stroke-linecap="round"/><line x1="1267.7" y1="664.55" x2="1267.7" y2="692.25" stroke="#fe2d8e" stroke-width="3.5" stroke-linecap="round"/><line x1="1275.6" y1="664.55" x2="1275.6" y2="690.55" stroke="#fe2d8e" stroke-width="3.5" stroke-linecap="round"/><line x1="1283.5" y1="665.45" x2="1283.5" y2="702.85" stroke="#fe2d8e" stroke-width="3.5" stroke-linecap="round"/><line x1="1291.4" y1="667.25" x2="1291.4" y2="695.85" stroke="#fe2d8e" stroke-width="3.5" stroke-linecap="round"/><line x1="1299.3" y1="672.55" x2="1299.3" y2="701.95" stroke="#fe2d8e" stroke-width="3.5" stroke-linecap="round"/><line x1="1307.2" y1="668.15" x2="1307.2" y2="698.85" stroke="#fe2d8e" stroke-width="3.5" stroke-linecap="round"/><line x1="1315.2" y1="670.75" x2="1315.2" y2="709.85" stroke="#fe2d8e" stroke-width="3.5" stroke-linecap="round"/><line x1="1323.1" y1="662.85" x2="1323.1" y2="699.75" stroke="#fe2d8e" stroke-width="3.5" stroke-linecap="round"/><line x1="1331" y1="662.85" x2="1331" y2="705.95" stroke="#fe2d8e" stroke-width="3.5" stroke-linecap="round"/><line x1="1338.9" y1="683.05" x2="1338.9" y2="702.85" stroke="#fe2d8e" stroke-width="3.5" stroke-linecap="round"/></g></svg>
<div class="t" style="left:1398.30px;top:652.61px;font-size:12.75px;color:#f4f5f6;font-weight:700;">Paid mix</div>
<div class="t" style="left:1676.00px;top:653.57px;font-size:11.5px;color:#6e7681;">Cadence</div>
<svg class="b" style="left:1724px;top:653px;" width="13" height="11" viewBox="0 0 13 11"><path d="M3.6 4.4 L6.9 7.6 L10.2 4.4" fill="none" stroke="#6e7681" stroke-width="1.3" stroke-linecap="round" stroke-linejoin="round"/></svg>
<div class="b" style="left:1397.5px;top:688px;width:7px;height:7px;background:#8c41fd;border-radius:3.5px;"></div>
<div class="b" style="left:1397.5px;top:703.2px;width:7px;height:7px;background:#fe2d8e;border-radius:3.5px;"></div>
<div class="t" style="left:1411.60px;top:686.02px;font-size:11.2px;color:#6e7681;letter-spacing:0.3px;">Monthly</div>
<div class="t" style="left:1411.60px;top:701.02px;font-size:11.2px;color:#6e7681;letter-spacing:0.3px;">Annual</div>
<div class="b" style="left:1487px;top:706.4px;width:248px;height:4px;border-radius:2px;background:linear-gradient(90deg,#8c41fd 0,#8c41fd 85.4%,#fe2d8e 85.4%,#fe2d8e 100%)"></div>
<div class="b" style="left:586px;top:759px;width:1177px;height:114px;border:1.8px solid #1e2125;border-radius:10px;box-sizing:border-box;"></div>
<div class="b" style="left:977.3px;top:796px;width:1.5px;height:60.5px;background:#1f2226;border-radius:0px;"></div>
<div class="b" style="left:1368.8px;top:796px;width:1.5px;height:60.5px;background:#1f2226;border-radius:0px;"></div>
<div class="t" style="left:614.30px;top:779.34px;font-size:13.3px;color:#f4f5f6;font-weight:700;">Engagement</div>
<div class="t" style="left:1659.00px;top:779.27px;font-size:11.5px;color:#6e7681;">All members</div>
<svg class="b" style="left:1724px;top:778px;" width="13" height="11" viewBox="0 0 13 11"><path d="M3.6 4.4 L6.9 7.6 L10.2 4.4" fill="none" stroke="#6e7681" stroke-width="1.3" stroke-linecap="round" stroke-linejoin="round"/></svg>
<div class="t" style="left:613.00px;top:807.69px;font-size:24.7px;color:#f4f5f6;font-weight:700;letter-spacing:-0.5px;">68%</div>
<div class="t" style="left:613.40px;top:836.07px;font-size:11.5px;color:#6e7681;">Engaged in the last <b style="color:#a0a7b0">30 days</b></div>
<div class="t" style="left:1006.50px;top:807.79px;font-size:24.7px;color:#f4f5f6;font-weight:700;letter-spacing:-0.5px;">36%</div>
<div class="t" style="left:1006.20px;top:836.17px;font-size:11.38px;color:#6e7681;">Engaged in the last <b style="color:#a0a7b0">7 days</b></div>
<div class="t" style="left:1397.60px;top:807.79px;font-size:24.7px;color:#f4f5f6;font-weight:700;letter-spacing:0.9px;">9,863</div>
<div class="t" style="left:1398.00px;top:836.53px;font-size:11.9px;color:#6e7681;">Newsletter subscribers</div>
<div class="b" style="left:586px;top:901.5px;width:1177px;height:300px;border:1.8px solid #1e2125;border-radius:10px;box-sizing:border-box;"></div>
<div class="t" style="left:615.30px;top:928.63px;font-size:13.2px;color:#f4f5f6;font-weight:700;">Recent posts</div>
<div class="t" style="left:716.00px;top:928.60px;font-size:13.7px;color:#6c7480;font-weight:700;">Member activity</div>
<div class="t" style="left:615.90px;top:962.27px;font-size:9.6px;color:#5f6772;font-weight:700;letter-spacing:0.1px;">TITLE</div>
<div class="t" style="left:1005.90px;top:962.27px;font-size:9.6px;color:#5f6772;font-weight:700;letter-spacing:0.1px;">SENDS</div>
<div class="t" style="left:1397.30px;top:962.27px;font-size:9.6px;color:#5f6772;font-weight:700;letter-spacing:0.1px;">OPEN RATE</div>
<div class="b" style="left:614.3px;top:979px;width:1119px;height:1.2px;background:#202328;border-radius:0px;"></div>
<div class="t" style="left:615.30px;top:999.94px;font-size:13.18px;color:#e6e7e9;">Subscription business metrics explained for publishers</div>
<div class="t" style="left:615.30px;top:1041.24px;font-size:13.18px;color:#e6e7e9;">How to create a valuable offer that converts</div>
<div class="t" style="left:1006.00px;top:1000.46px;font-size:12.8px;color:#e6e7e9;">12,984</div>
<div class="t" style="left:1006.00px;top:1041.56px;font-size:12.8px;color:#e6e7e9;letter-spacing:-0.55px;">11,701</div>
<div class="t" style="left:1397.50px;top:1000.72px;font-size:12.5px;color:#e6e7e9;letter-spacing:-0.45px;">76%</div>
<div class="t" style="left:1397.50px;top:1041.12px;font-size:12.5px;color:#e6e7e9;letter-spacing:-0.45px;">92%</div>
<div class="b" style="left:1449px;top:1003.8px;width:284.5px;height:4px;background:#393c42;border-radius:2px;"></div>
<div class="b" style="left:1449px;top:1003.8px;width:223px;height:4px;border-radius:2px;background:linear-gradient(90deg,#8c41fd,#fe2d8e)"></div>
<div class="b" style="left:1449px;top:1045.1px;width:284.5px;height:4px;background:#393c42;border-radius:2px;"></div>
<div class="b" style="left:1449px;top:1045.1px;width:246.70000000000005px;height:4px;border-radius:2px;background:linear-gradient(90deg,#8c41fd,#fe2d8e)"></div>
</div></div>
</body></html>
